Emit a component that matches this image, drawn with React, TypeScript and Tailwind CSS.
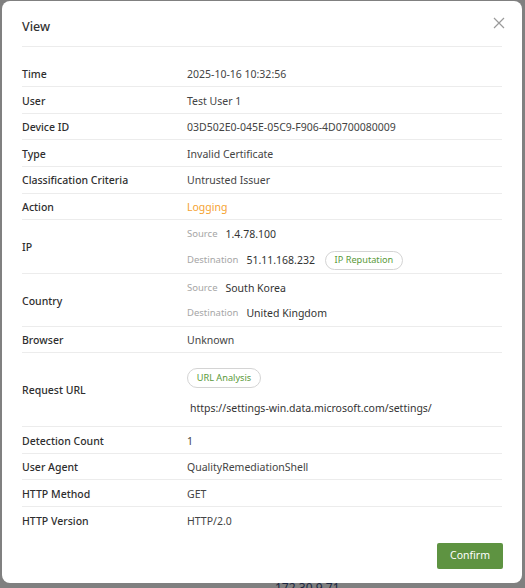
import React from "react";

const font = { fontFamily: '"Noto Sans", "Open Sans", sans-serif' };

function Row({ label, children, h = "h-[26.6px]", last = false }: { label: string; children: React.ReactNode; h?: string; last?: boolean }) {
  return (
    <div className={`flex items-center ${h} ${last ? "" : "border-b border-[#ececec]"}`}>
      <div className="w-[165px] shrink-0 text-[10.5px] leading-[14px] text-[#2e2e2e] font-medium pt-[1px]">{label}</div>
      <div className="flex-1 text-[10.5px] leading-[14px] text-[#444] pt-[1px]">{children}</div>
    </div>
  );
}

function Sub({ k, v, extra, h }: { k: string; v: string; extra?: React.ReactNode; h: string }) {
  return (
    <div className={`flex items-center ${h}`}>
      <span className="text-[9.5px] text-[#a6a6a6] mr-[8px]">{k}</span>
      <span className="text-[10.5px] text-[#333]">{v}</span>
      {extra}
    </div>
  );
}

function Pill({ children, cls }: { children: React.ReactNode; cls: string }) {
  return (
    <span className={`inline-flex items-center justify-center rounded-full border border-[#d4d4d4] text-[9.2px] text-[#5a9a3a] bg-white ${cls}`}>
      {children}
    </span>
  );
}

export default function App() {
  return (
    <div className="relative w-[525px] h-[588px] bg-[#808080] overflow-hidden" style={font}>
      <div className="absolute left-[275px] top-[580px] text-[12px] leading-[16px] text-[#1c2740]">172.30.9.71</div>
      <div className="absolute left-[2px] top-[1px] w-[520px] h-[582px] bg-white rounded-[8px] flex flex-col px-[20px]">
        <div className="flex items-center justify-between h-[46px] border-b border-[#ececec] shrink-0">
          <div className="text-[12.5px] text-[#333] font-medium pt-[8px]">View</div>
          <svg width="12" height="12" viewBox="0 0 12 12" className="mr-[-3px] mt-[-2px]">
            <path d="M1 1 L11 11 M11 1 L1 11" stroke="#9a9a9a" strokeWidth="1.2" fill="none" />
          </svg>
        </div>
        <div className="pt-[13.7px] flex flex-col">
          <Row label="Time">2025-10-16 10:32:56</Row>
          <Row label="User">Test User 1</Row>
          <Row label="Device ID">03D502E0-045E-05C9-F906-4D0700080009</Row>
          <Row label="Type">Invalid Certificate</Row>
          <Row label="Classification Criteria">Untrusted Issuer</Row>
          <Row label="Action"><span className="text-[#f5a231]">Logging</span></Row>
          <Row label="IP" h="h-[54px]">
            <div className="flex flex-col">
              <Sub k="Source" v="1.4.78.100" h="h-[26px]" />
              <Sub k="Destination" v="51.11.168.232" h="h-[26px]" extra={<Pill cls="ml-[10px] w-[78px] h-[19px]">IP Reputation</Pill>} />
            </div>
          </Row>
          <Row label="Country" h="h-[52.7px]">
            <div className="flex flex-col mt-[-1px]">
              <Sub k="Source" v="South Korea" h="h-[26px]" />
              <Sub k="Destination" v="United Kingdom" h="h-[25px]" />
            </div>
          </Row>
          <Row label="Browser" h="h-[25.6px]">Unknown</Row>
          <Row label="Request URL" h="h-[74.7px]">
            <div className="flex flex-col pt-[3px]">
              <Pill cls="w-[74px] h-[20px]">URL Analysis</Pill>
              <div className="pl-[3px] mt-[13px] text-[10.5px] text-[#333]">https://settings-win.data.microsoft.com/settings/</div>
            </div>
          </Row>
          <Row label="Detection Count">1</Row>
          <Row label="User Agent" h="h-[26px]">QualityRemediationShell</Row>
          <Row label="HTTP Method" h="h-[27.4px]">GET</Row>
          <Row label="HTTP Version" last>HTTP/2.0</Row>
        </div>
        <div className="flex justify-end pt-[9px]">
          <button className="w-[66px] h-[26px] bg-[#5e9341] text-white text-[10.5px] rounded-[2px] mr-[-1px]">Confirm</button>
        </div>
      </div>
    </div>
  );
}
